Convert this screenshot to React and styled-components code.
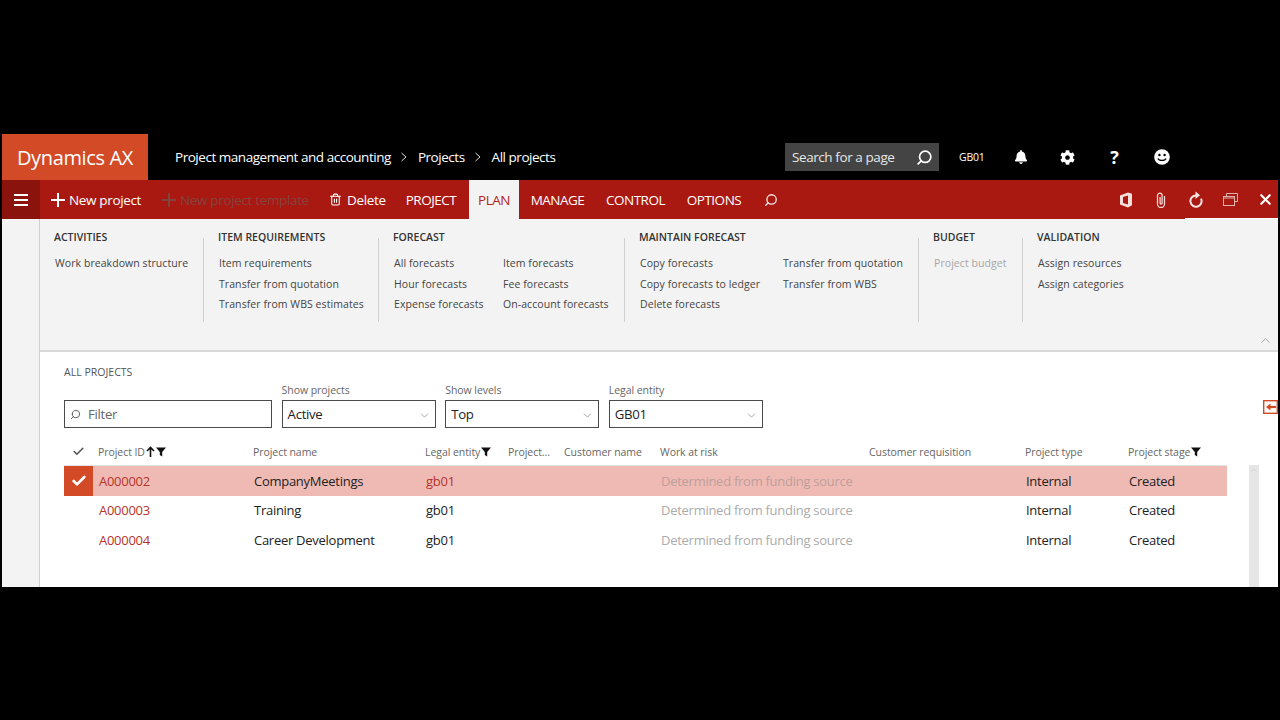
import React from 'react';
import styled, { createGlobalStyle } from 'styled-components';
import { Check, ChevronDown, ChevronUp, Search, Trash2, X } from 'lucide-react';
import { FaBell, FaCog } from 'react-icons/fa';

const GlobalStyle = createGlobalStyle`
  html, body {
    margin: 0;
    padding: 0;
    background: #000;
    font-family: "Open Sans", "Noto Sans", "Liberation Sans", sans-serif;
  }
`;

const Page = styled.div`
  width: 1280px;
  height: 720px;
  background: #000;
  padding: 134px 2px 133px 2px;
  box-sizing: border-box;
  overflow: hidden;
`;

const Screen = styled.div`
  width: 1276px;
  height: 453px;
  display: flex;
  flex-direction: column;
  background: #fff;
  overflow: hidden;
`;

const TopBar = styled.div`
  height: 46px;
  flex: none;
  display: flex;
  align-items: center;
  background: #000;
  color: #fff;
`;

const Logo = styled.div`
  width: 146px;
  height: 46px;
  background: #d34a26;
  font-size: 20px;
  line-height: 48px;
  letter-spacing: -0.35px;
  text-align: center;
  flex: none;
`;

const Crumbs = styled.div`
  display: flex;
  align-items: center;
  margin-left: 27px;
  font-size: 13.5px;
  letter-spacing: -0.47px;
  white-space: nowrap;
  width: 610px;
  flex: none;
`;

const CrumbSep = styled.span`
  display: flex;
  width: 27px;
  justify-content: center;
  color: #ddd;
`;

const SearchBox = styled.div`
  width: 154px;
  height: 28px;
  flex: none;
  box-sizing: border-box;
  background: #444;
  display: flex;
  align-items: center;
  justify-content: space-between;
  padding: 0 6px 0 7px;
  font-size: 13.5px;
  letter-spacing: -0.42px;
  color: #e6e6e6;
`;

const Company = styled.div`
  margin-left: 20px;
  width: 38px;
  font-size: 10.5px;
  letter-spacing: -0.2px;
  flex: none;
`;

const TopIcon = styled.div`
  width: 47px;
  display: flex;
  justify-content: center;
  font-size: 18px;
  line-height: 18px;
  font-weight: 700;
  flex: none;
`;

const CommandBar = styled.div`
  position: relative;
  height: 39px;
  flex: none;
  display: flex;
  align-items: center;
  background: #a91911;
  color: #fff;
  font-size: 13.5px;
  letter-spacing: -0.35px;
  white-space: nowrap;

  &::after {
    content: '';
    position: absolute;
    right: 0;
    bottom: 0;
    width: 93px;
    height: 1px;
    background: #fff;
  }
`;

const MenuButton = styled.div`
  width: 38px;
  height: 39px;
  flex: none;
  background: #8a130d;
  display: flex;
  flex-direction: column;
  align-items: center;
  justify-content: center;
  gap: 3px;

  span {
    width: 14px;
    height: 2px;
    background: #fff;
  }
`;

const Action = styled.div`
  display: flex;
  align-items: center;
  gap: ${(p) => p.$gap || 3}px;
  width: ${(p) => p.$w}px;
  flex: none;
  padding-left: ${(p) => p.$pl || 0}px;
  box-sizing: border-box;
  height: 100%;
  color: ${(p) => (p.$disabled ? '#84433e' : '#fff')};
`;

const Tab = styled.div`
  width: ${(p) => p.$w}px;
  flex: none;
  height: 100%;
  display: flex;
  align-items: center;
  justify-content: center;
  font-size: 13.5px;
  letter-spacing: -0.5px;
  background: ${(p) => (p.$active ? '#f3f3f3' : 'transparent')};
  color: ${(p) => (p.$active ? '#b3261c' : '#fff')};
`;

const CommandSearch = styled(Search)`
  margin-left: 11px;
  transform: scaleX(-1);
`;

const CommandRight = styled.div`
  margin-left: auto;
  margin-right: -5px;
  display: flex;
  align-items: center;
  height: 100%;
`;

const CommandIcon = styled.div`
  width: 35px;
  height: 100%;
  display: flex;
  align-items: center;
  justify-content: center;
`;

const Body = styled.div`
  flex: 1;
  display: flex;
  min-height: 0;
`;

const Rail = styled.div`
  width: 37px;
  flex: none;
  background: #f3f3f3;
  border-right: 1px solid #cfcfcf;
`;

const Main = styled.div`
  flex: 1;
  min-width: 0;
  display: flex;
  flex-direction: column;
`;

const Ribbon = styled.div`
  height: 133px;
  flex: none;
  box-sizing: border-box;
  background: #f3f3f3;
  border-bottom: 2px solid #d9d9d9;
  display: flex;
  padding: 10px 5px 2px 0;
`;

const Group = styled.div`
  width: ${(p) => p.$w}px;
  flex: none;
  box-sizing: border-box;
  padding-left: ${(p) => p.$pl}px;
`;

const GroupTitle = styled.div`
  height: 17px;
  line-height: 17px;
  font-size: 10.5px;
  font-weight: 600;
  letter-spacing: 0;
  color: #333;
  white-space: nowrap;
`;

const GroupBody = styled.div`
  display: flex;
  margin-top: 7px;
  padding-left: 1px;
`;

const GroupColumn = styled.div`
  width: ${(p) => (p.$w ? `${p.$w}px` : 'auto')};
  flex: none;
  display: flex;
  flex-direction: column;
`;

const RibbonLink = styled.div`
  height: 20.5px;
  line-height: 20.5px;
  font-size: 10.5px;
  letter-spacing: 0.07px;
  white-space: nowrap;
  color: ${(p) => (p.$disabled ? '#a6a6a6' : '#444')};
`;

const Divider = styled.div`
  width: 1px;
  height: 84px;
  margin-top: 9px;
  margin-right: -1px;
  flex: none;
  background: #cfcfcf;
`;

const RibbonEnd = styled.div`
  margin-left: auto;
  align-self: flex-end;
  display: flex;
  color: #8c8c8c;
`;

const Content = styled.div`
  flex: 1;
  min-height: 0;
  display: flex;
  padding-left: 24px;
`;

const Form = styled.div`
  width: 1163px;
  flex: none;
`;

const Caption = styled.div`
  margin-top: 13px;
  height: 14px;
  line-height: 14px;
  font-size: 10.5px;
  letter-spacing: 0.02px;
  color: #555;
`;

const FilterRow = styled.div`
  display: flex;
  align-items: flex-end;
  gap: 9.6px;
  margin-top: 4px;
`;

const Field = styled.div`
  width: ${(p) => p.$w}px;
  flex: none;
`;

const FieldLabel = styled.div`
  height: 14px;
  line-height: 14px;
  margin-bottom: 3px;
  font-size: 10.5px;
  letter-spacing: -0.05px;
  color: #666;
`;

const InputBox = styled.div`
  height: 28px;
  box-sizing: border-box;
  border: 1px solid #4a4a4a;
  display: flex;
  align-items: center;
  justify-content: space-between;
  padding: 0 4px 0 5px;
  font-size: 13.2px;
  letter-spacing: -0.3px;
  color: #222;
`;

const SelectChevron = styled(ChevronDown)`
  margin-top: 3px;
`;

const FilterText = styled.span`
  display: flex;
  align-items: center;
  gap: 7px;
  color: #666;
`;

const FilterIcon = styled(Search)`
  transform: scaleX(-1);
`;

const Grid = styled.div`
  margin-top: 14px;
`;

const gridColumns = '34px 155px 172px 83px 56px 96px 209px 156px 103px 99px';

const HeadRow = styled.div`
  display: grid;
  grid-template-columns: ${gridColumns};
  height: 24px;
  align-items: center;
  padding-bottom: 4px;
  border-bottom: 1px solid #e2e2e2;
  box-sizing: border-box;
`;

const HeadCell = styled.div`
  display: flex;
  align-items: center;
  gap: 1px;
  font-size: 10.5px;
  letter-spacing: -0.06px;
  color: #666;
  white-space: nowrap;
`;

const Row = styled.div`
  display: grid;
  grid-template-columns: ${gridColumns};
  height: ${(p) => p.$h}px;
  align-items: center;
  background: ${(p) => (p.$selected ? '#f0bab4' : 'transparent')};
`;

const CheckCell = styled.div`
  width: 29px;
  height: 100%;
  display: flex;
  align-items: center;
  justify-content: center;
  background: ${(p) => (p.$selected ? '#d34a26' : 'transparent')};
`;

const Cell = styled.div`
  padding-left: 1px;
  font-size: 13px;
  letter-spacing: -0.27px;
  white-space: nowrap;
  color: ${(p) => p.$color || '#222'};
`;

const LinkCell = styled(Cell)`
  color: #b5342a;
`;

const Side = styled.div`
  flex: 1;
  min-width: 0;
  display: flex;
  flex-direction: column;
  align-items: flex-end;
`;

const PaneToggle = styled.div`
  display: flex;
  margin-top: 48px;
`;

const ScrollTrack = styled.div`
  width: 10px;
  margin-top: 51px;
  margin-right: 19px;
  flex: 1;
  background: #e6e6e6;
  display: flex;
  justify-content: center;
  color: #c4c4c4;
`;

const PlusIcon = ({ color = '#fff' }) => (
  <svg width="16" height="16" viewBox="0 0 16 16">
    <path d="M8 1v14M1 8h14" stroke={color} strokeWidth="2" fill="none" />
  </svg>
);

const ChevronRight = () => (
  <svg width="8" height="10" viewBox="0 0 8 10" fill="none" stroke="currentColor">
    <path d="M1.5 1 6 5 1.5 9" />
  </svg>
);

const FaceIcon = () => (
  <svg width="16" height="16" viewBox="0 0 16 16">
    <circle cx="8" cy="8" r="7.8" fill="#fff" />
    <circle cx="5.4" cy="6" r="1.2" fill="#000" />
    <circle cx="10.6" cy="6" r="1.2" fill="#000" />
    <path d="M4 9.5c1 2.6 7 2.6 8 0" stroke="#000" strokeWidth="1.3" fill="none" />
  </svg>
);

const OfficeIcon = () => (
  <svg width="14" height="16" viewBox="0 0 14 16" fill="#f7dfdc">
    <path fillRule="evenodd" d="M1 3.6 9 .5l4 1.3v11.4l-4 2.3-8-3.1ZM4 5 9 3.6v8.8L4 11Z" />
  </svg>
);

const ClipIcon = () => (
  <svg width="12" height="16" viewBox="0 0 12 16" fill="none" stroke="#f3d5d2" strokeWidth="1.3">
    <path d="M9.5 4v8a3.5 3.5 0 0 1-7 0V3.5a2.3 2.3 0 0 1 4.6 0V11a1 1 0 0 1-2 0V5" />
  </svg>
);

const RefreshIcon = () => (
  <svg width="16" height="17" viewBox="0 0 16 17">
    <path d="M8 4.5A5.6 5.6 0 1 0 13 7.6" fill="none" stroke="#f7e6e4" strokeWidth="2" />
    <path d="M7.5.5 12 4.3 7.5 8Z" fill="#f7e6e4" />
  </svg>
);

const RestoreIcon = () => (
  <svg width="15" height="13" viewBox="0 0 15 13" fill="none" stroke="#dcb3af" strokeWidth="1">
    <path d="M3.5 3V.5h11v8H12" />
    <rect x="0.5" y="3.5" width="11" height="9" />
    <path d="M1 5h10" />
  </svg>
);

const FunnelIcon = () => (
  <svg width="10" height="10" viewBox="0 0 10 10" fill="#111">
    <path d="M0 .5h10L6.2 5v4.5L3.8 8V5Z" />
  </svg>
);

const SortUpIcon = () => (
  <svg width="9" height="11" viewBox="0 0 9 11" fill="none" stroke="#111" strokeWidth="1.6">
    <path d="M4.5 11V1.5M1 5l3.5-3.5L8 5" />
  </svg>
);

const PaneIcon = () => (
  <svg width="15" height="14" viewBox="0 0 15 14" fill="none" stroke="#d34a26" strokeWidth="1.4">
    <rect x="0.7" y="0.7" width="13.6" height="12.6" />
    <path d="M13 7H6" strokeWidth="2.2" />
    <path d="M3 7 7.5 3.5v7Z" fill="#d34a26" strokeWidth="0" />
  </svg>
);

const ribbonGroups = [
  { title: 'ACTIVITIES', w: 163, pl: 14, cols: [{ links: ['Work breakdown structure'] }] },
  { title: 'ITEM REQUIREMENTS', w: 175, pl: 15, cols: [{ links: ['Item requirements', 'Transfer from quotation', 'Transfer from WBS estimates'] }] },
  {
    title: 'FORECAST', w: 246, pl: 15,
    cols: [
      { w: 109, links: ['All forecasts', 'Hour forecasts', 'Expense forecasts'] },
      { links: ['Item forecasts', 'Fee forecasts', 'On-account forecasts'] },
    ],
  },
  {
    title: 'MAINTAIN FORECAST', w: 294, pl: 15,
    cols: [
      { w: 143, links: ['Copy forecasts', 'Copy forecasts to ledger', 'Delete forecasts'] },
      { links: ['Transfer from quotation', 'Transfer from WBS'] },
    ],
  },
  { title: 'BUDGET', w: 104, pl: 15, cols: [{ links: ['Project budget'], disabled: true }] },
  { title: 'VALIDATION', w: 120, pl: 15, cols: [{ links: ['Assign resources', 'Assign categories'] }] },
];

const tabs = [
  { label: 'PROJECT', w: 76 },
  { label: 'PLAN', w: 50, active: true },
  { label: 'MANAGE', w: 77 },
  { label: 'CONTROL', w: 79 },
  { label: 'OPTIONS', w: 78 },
];

const filters = [
  { label: 'Show projects', value: 'Active', w: 154 },
  { label: 'Show levels', value: 'Top', w: 154 },
  { label: 'Legal entity', value: 'GB01', w: 154 },
];

const rows = [
  { id: 'A000002', name: 'CompanyMeetings', selected: true, h: 30 },
  { id: 'A000003', name: 'Training', h: 28 },
  { id: 'A000004', name: 'Career Development', h: 31 },
];

export default function App() {
  return (
    <>
      <GlobalStyle />
      <Page>
        <Screen>
          <TopBar>
            <Logo>Dynamics AX</Logo>
            <Crumbs>
              Project management and accounting
              <CrumbSep><ChevronRight /></CrumbSep>
              Projects
              <CrumbSep><ChevronRight /></CrumbSep>
              All projects
            </Crumbs>
            <SearchBox>
              Search for a page
              <FilterIcon size={17} strokeWidth={2.4} color="#fff" />
            </SearchBox>
            <Company>GB01</Company>
            <TopIcon><FaBell size={14} color="#fff" /></TopIcon>
            <TopIcon><FaCog size={15} color="#fff" /></TopIcon>
            <TopIcon>?</TopIcon>
            <TopIcon><FaceIcon /></TopIcon>
          </TopBar>
          <CommandBar>
            <MenuButton><span /><span /><span /></MenuButton>
            <Action $w={113} $pl={10}><PlusIcon />New project</Action>
            <Action $w={176} $pl={8} $disabled><PlusIcon color="#84433e" />New project template</Action>
            <Action $w={64} $gap={5}><Trash2 size={13} color="#fff" />Delete</Action>
            {tabs.map((t) => (
              <Tab key={t.label} $w={t.w} $active={t.active}>{t.label}</Tab>
            ))}
            <CommandSearch size={14} color="#eee" strokeWidth={2.2} />
            <CommandRight>
              <CommandIcon><OfficeIcon /></CommandIcon>
              <CommandIcon><ClipIcon /></CommandIcon>
              <CommandIcon><RefreshIcon /></CommandIcon>
              <CommandIcon><RestoreIcon /></CommandIcon>
              <CommandIcon><X size={17} color="#fff" strokeWidth={3} /></CommandIcon>
            </CommandRight>
          </CommandBar>
          <Body>
            <Rail />
            <Main>
              <Ribbon>
                {ribbonGroups.map((g, i) => (
                  <React.Fragment key={g.title}>
                    {i > 0 && <Divider />}
                    <Group $w={g.w} $pl={g.pl}>
                      <GroupTitle>{g.title}</GroupTitle>
                      <GroupBody>
                        {g.cols.map((c) => (
                          <GroupColumn key={c.links[0]} $w={c.w}>
                            {c.links.map((l) => (
                              <RibbonLink key={l} $disabled={c.disabled}>{l}</RibbonLink>
                            ))}
                          </GroupColumn>
                        ))}
                      </GroupBody>
                    </Group>
                  </React.Fragment>
                ))}
                <RibbonEnd><ChevronUp size={15} strokeWidth={1.2} /></RibbonEnd>
              </Ribbon>
              <Content>
                <Form>
                  <Caption>ALL PROJECTS</Caption>
                  <FilterRow>
                    <Field $w={208}>
                      <InputBox>
                        <FilterText>
                          <FilterIcon size={11} color="#555" />
                          Filter
                        </FilterText>
                      </InputBox>
                    </Field>
                    {filters.map((f) => (
                      <Field key={f.label} $w={f.w}>
                        <FieldLabel>{f.label}</FieldLabel>
                        <InputBox>
                          {f.value}
                          <SelectChevron size={13} color="#777" strokeWidth={1.2} />
                        </InputBox>
                      </Field>
                    ))}
                  </FilterRow>
                  <Grid>
                    <HeadRow>
                      <CheckCell><Check size={13} color="#555" strokeWidth={3} /></CheckCell>
                      <HeadCell>Project ID<SortUpIcon /><FunnelIcon /></HeadCell>
                      <HeadCell>Project name</HeadCell>
                      <HeadCell>Legal entity<FunnelIcon /></HeadCell>
                      <HeadCell>Project...</HeadCell>
                      <HeadCell>Customer name</HeadCell>
                      <HeadCell>Work at risk</HeadCell>
                      <HeadCell>Customer requisition</HeadCell>
                      <HeadCell>Project type</HeadCell>
                      <HeadCell>Project stage<FunnelIcon /></HeadCell>
                    </HeadRow>
                    {rows.map((r) => (
                      <Row key={r.id} $selected={r.selected} $h={r.h}>
                        <CheckCell $selected={r.selected}>
                          {r.selected && <Check size={16} color="#fff" strokeWidth={4} />}
                        </CheckCell>
                        <LinkCell>{r.id}</LinkCell>
                        <Cell>{r.name}</Cell>
                        {r.selected ? <LinkCell>gb01</LinkCell> : <Cell>gb01</Cell>}
                        <Cell />
                        <Cell />
                        <Cell $color={r.selected ? '#bd9f9b' : '#ababab'}>Determined from funding source</Cell>
                        <Cell />
                        <Cell>Internal</Cell>
                        <Cell>Created</Cell>
                      </Row>
                    ))}
                  </Grid>
                </Form>
                <Side>
                  <PaneToggle><PaneIcon /></PaneToggle>
                  <ScrollTrack><ChevronUp size={10} strokeWidth={1.5} /></ScrollTrack>
                </Side>
              </Content>
            </Main>
          </Body>
        </Screen>
      </Page>
    </>
  );
}
